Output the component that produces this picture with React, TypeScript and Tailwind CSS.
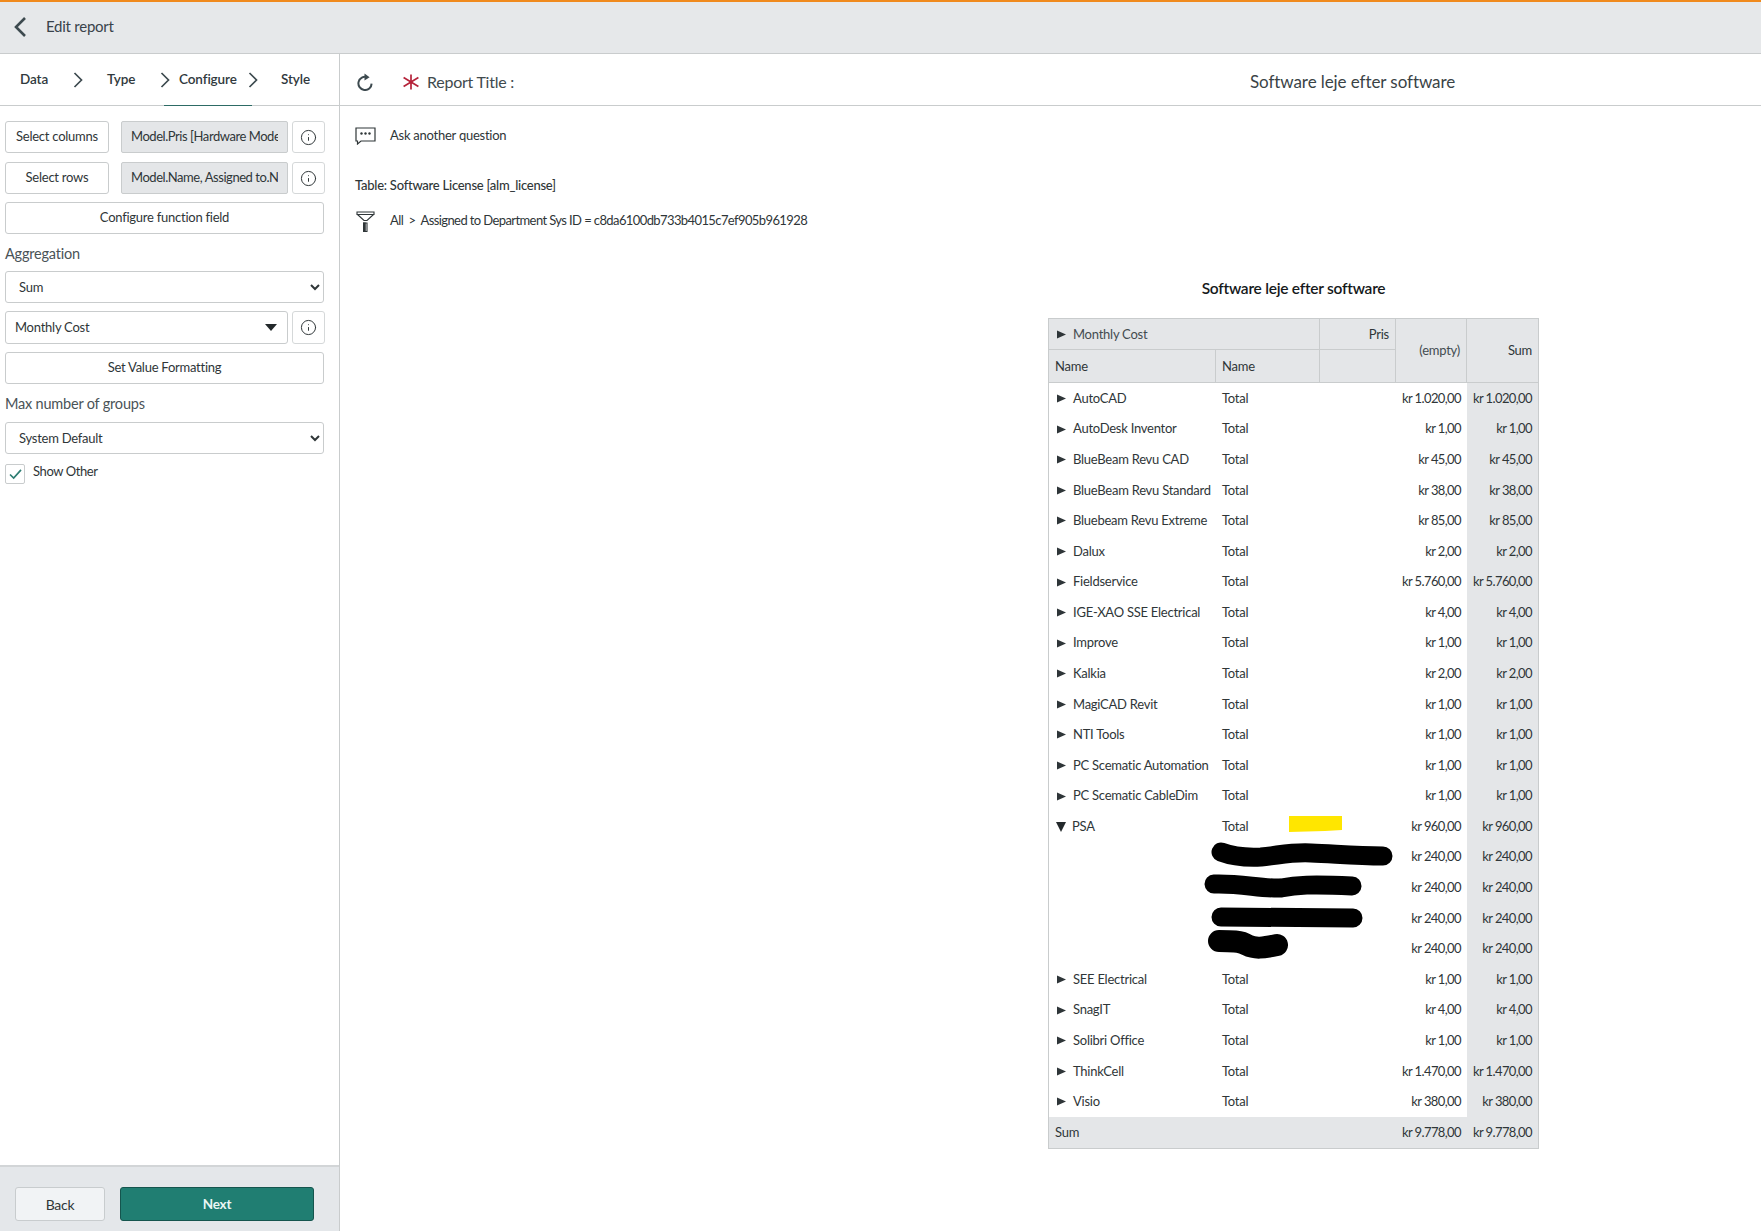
import { Info } from "lucide-react";

interface ReportRow {
  name: string;
  value: string;
  open?: boolean;
}

const rows: ReportRow[] = [
  { name: "AutoCAD", value: "kr 1.020,00" },
  { name: "AutoDesk Inventor", value: "kr 1,00" },
  { name: "BlueBeam Revu CAD", value: "kr 45,00" },
  { name: "BlueBeam Revu Standard", value: "kr 38,00" },
  { name: "Bluebeam Revu Extreme", value: "kr 85,00" },
  { name: "Dalux", value: "kr 2,00" },
  { name: "Fieldservice", value: "kr 5.760,00" },
  { name: "IGE-XAO SSE Electrical", value: "kr 4,00" },
  { name: "Improve", value: "kr 1,00" },
  { name: "Kalkia", value: "kr 2,00" },
  { name: "MagiCAD Revit", value: "kr 1,00" },
  { name: "NTI Tools", value: "kr 1,00" },
  { name: "PC Scematic Automation", value: "kr 1,00" },
  { name: "PC Scematic CableDim", value: "kr 1,00" },
  { name: "PSA", value: "kr 960,00", open: true },
];

const tailRows: ReportRow[] = [
  { name: "SEE Electrical", value: "kr 1,00" },
  { name: "SnagIT", value: "kr 4,00" },
  { name: "Solibri Office", value: "kr 1,00" },
  { name: "ThinkCell", value: "kr 1.470,00" },
  { name: "Visio", value: "kr 380,00" },
];

function Chevron({ className }: { className: string }) {
  return (
    <svg viewBox="0 0 10 16" className={className} fill="none" stroke="#3d4a4f" strokeWidth="1.7">
      <path d="M1.5 1 L8.5 8 L1.5 15" />
    </svg>
  );
}

function RowTriangle() {
  return (
    <svg viewBox="0 0 9 9" className="w-[9px] h-[9px] ml-[8px] mr-[7px] shrink-0" fill="#2e3538">
      <path d="M0 0.5 L9 4.5 L0 8.5 Z" />
    </svg>
  );
}

function BodyRow({ row }: { row: ReportRow }) {
  return (
    <div className="grid grid-cols-[167px_104px_76px_71px_71px] h-[30.58px] items-center">
      <div className="flex items-center whitespace-nowrap">
        {row.open ? (
          <svg viewBox="0 0 10 10" className="w-[10px] h-[10px] ml-[7px] mr-[6px] shrink-0" fill="#23292b">
            <path d="M0 0 L10 0 L5 10 Z" />
          </svg>
        ) : (
          <RowTriangle />
        )}
        {row.name}
      </div>
      <div className="pl-[6px]">Total</div>
      <div />
      <div className="pr-[6px] text-right whitespace-nowrap tracking-[-0.6px]">{row.value}</div>
      <div className="pr-[6px] whitespace-nowrap tracking-[-0.6px] bg-[#e4e6e8] h-full flex items-center justify-end">
        {row.value}
      </div>
    </div>
  );
}

function SubRow() {
  return (
    <div className="grid grid-cols-[167px_104px_76px_71px_71px] h-[30.58px] items-center">
      <div />
      <div />
      <div />
      <div className="pr-[6px] text-right whitespace-nowrap tracking-[-0.6px]">kr 240,00</div>
      <div className="pr-[6px] whitespace-nowrap tracking-[-0.6px] bg-[#e4e6e8] h-full flex items-center justify-end">
        kr 240,00
      </div>
    </div>
  );
}

function ReportTable() {
  return (
    <div className="relative w-[491px] border border-[#c9cccd] text-[#2f3638]">
      <div className="grid grid-cols-[167px_104px_76px_71px_71px] grid-rows-[31px_32px] bg-[#e4e6e8] border-b border-[#c9cccd]">
        <div className="col-span-2 flex items-center border-r border-b border-[#c9cccd] text-[#434c50]">
          <RowTriangle />
          Monthly Cost
        </div>
        <div className="flex items-center justify-end pr-[6px] border-r border-b border-[#c9cccd]">Pris</div>
        <div className="row-span-2 flex items-center justify-end pr-[6px] border-r border-[#c9cccd] text-[#434c50]">
          (empty)
        </div>
        <div className="row-span-2 flex items-center justify-end pr-[6px]">Sum</div>
        <div className="flex items-center pl-[6px] border-r border-[#c9cccd]">Name</div>
        <div className="flex items-center pl-[6px] border-r border-[#c9cccd]">Name</div>
        <div className="border-r border-[#c9cccd]" />
      </div>
      {rows.map((r) => (
        <BodyRow key={r.name} row={r} />
      ))}
      <SubRow />
      <SubRow />
      <SubRow />
      <SubRow />
      {tailRows.map((r) => (
        <BodyRow key={r.name} row={r} />
      ))}
      <div className="grid grid-cols-[271px_76px_71px_71px] h-[31px] items-center bg-[#e4e6e8]">
        <div className="pl-[6px]">Sum</div>
        <div />
        <div className="pr-[6px] text-right whitespace-nowrap tracking-[-0.6px]">kr 9.778,00</div>
        <div className="pr-[6px] text-right whitespace-nowrap tracking-[-0.6px]">kr 9.778,00</div>
      </div>
      {/* redactions painted over the PSA rows */}
      <svg viewBox="0 0 200 150" className="absolute left-[152px] top-[490px] w-[200px] h-[150px]" fill="none" stroke="#000" strokeLinecap="round">
        <path d="M20 43 C28 46 40 49 60 48 C80 46 90 43 110 44 C135 45 155 47 182 47" strokeWidth="19" />
        <path d="M13 75 C40 74 60 80 80 79 C95 76 110 75 151 77" strokeWidth="19" />
        <path d="M20 108 L152 109" strokeWidth="19" />
        <path d="M18 132 C30 132 40 132 46 136 C54 140 62 139 76 136" strokeWidth="22" />
        <path d="M88 7 L141 7 L141 21 L124 22 L88 23 Z" fill="#ffe600" stroke="none" />
      </svg>
    </div>
  );
}

export default function App() {
  const field = "border border-[#c9cccd] rounded-[3px] bg-white";
  const readField = "w-[167px] mr-[4px] px-[9px] tracking-[-0.45px] bg-[#e4e6e8] border border-[#c9cccd] rounded-[2px] outline-none";
  const infoBtn = "w-[33px] border border-[#d5d8d9] rounded-[3px] flex items-center justify-center";

  return (
    <div
      className="w-[1761px] h-[1231px] overflow-hidden flex flex-col bg-white text-[#2f3638] text-[13px] tracking-[-0.25px]"
      style={{ fontFamily: "Lato, 'Noto Sans', sans-serif" }}
    >
      {/* Top bar */}
      <div className="h-[54px] shrink-0 bg-[#e6e8ea] border-t-2 border-t-[#f08a1d] border-b border-b-[#c9cccd] flex items-center">
        <svg viewBox="0 0 14 22" className="w-[14px] h-[22px] ml-[13px] mb-[2px]" fill="none" stroke="#3d4a4f" strokeWidth="2.6">
          <path d="M12 2 L3 11 L12 20" />
        </svg>
        <span className="ml-[19px] mb-[2px] text-[15px] text-[#39434a]">Edit report</span>
      </div>

      <div className="flex flex-1 min-h-0">
        {/* Left panel */}
        <aside className="w-[340px] shrink-0 border-r border-[#c9cccd] flex flex-col">
          <div className="h-[52px] shrink-0 border-b border-[#c9cccd] flex items-center font-semibold text-[13.5px] tracking-[-0.1px] text-[#30393d] relative">
            <span className="ml-[20px] w-[27px]">Data</span>
            <Chevron className="w-[10px] h-[16px] ml-[26px]" />
            <span className="ml-[24px] w-[29px]">Type</span>
            <Chevron className="w-[10px] h-[16px] ml-[24px]" />
            <span className="ml-[9px] w-[59px] whitespace-nowrap">Configure</span>
            <Chevron className="w-[10px] h-[16px] ml-[10px]" />
            <span className="ml-[23px]">Style</span>
            <div className="absolute left-[164px] bottom-[-1px] w-[88px] h-px bg-[#2d6b65]" />
          </div>

          <div className="flex-1 px-[5px] pt-[15px] flex flex-col">
            <div className="flex h-[32px]">
              <button className={`${field} w-[104px] mr-[12px]`}>Select columns</button>
              <input readOnly value="Model.Pris [Hardware Model]" className={readField} />
              <div className={infoBtn}>
                <Info size={17} strokeWidth={1.4} />
              </div>
            </div>
            <div className="flex h-[32px] mt-[9px]">
              <button className={`${field} w-[104px] mr-[12px]`}>Select rows</button>
              <input readOnly value="Model.Name, Assigned to.Name" className={readField} />
              <div className={infoBtn}>
                <Info size={17} strokeWidth={1.4} />
              </div>
            </div>
            <button className={`${field} w-[319px] h-[32px] mt-[8px]`}>Configure function field</button>

            <div className="mt-[6px] h-[28px] flex items-center text-[14.5px] tracking-[-0.2px] text-[#4a5357]">Aggregation</div>
            <select className={`${field} w-[319px] h-[32px] mt-[3px] px-[9px] outline-none`} defaultValue="Sum">
              <option>Sum</option>
            </select>
            <div className="flex h-[33px] mt-[8px]">
              <div className={`${field} w-[283px] mr-[4px] pl-[9px] pr-[10px] flex items-center justify-between`}>
                <span>Monthly Cost</span>
                <svg viewBox="0 0 12 7" className="w-[12px] h-[7px]" fill="#23292b">
                  <path d="M0 0 L12 0 L6 7 Z" />
                </svg>
              </div>
              <div className={infoBtn}>
                <Info size={17} strokeWidth={1.4} />
              </div>
            </div>
            <button className={`${field} w-[319px] h-[32px] mt-[8px]`}>Set Value Formatting</button>

            <div className="mt-[6px] h-[28px] flex items-center text-[14.5px] tracking-[-0.2px] text-[#4a5357]">Max number of groups</div>
            <select className={`${field} w-[319px] h-[32px] mt-[4px] px-[9px] outline-none`} defaultValue="System Default">
              <option>System Default</option>
            </select>
            <div className="flex items-center mt-[8px]">
              <div className="w-[20px] h-[20px] border border-[#c9cccd] rounded-[2px] flex items-center justify-center">
                <svg viewBox="0 0 14 12" className="w-[13px] h-[11px] mt-[2px]" fill="none" stroke="#2d7d72" strokeWidth="1.8">
                  <path d="M1 6 L5 10 L13 1" />
                </svg>
              </div>
              <span className="ml-[8px] mb-[4px] tracking-[-0.4px]">Show Other</span>
            </div>
          </div>

          <div className="h-[66px] shrink-0 bg-[#e4e7ea] border-t-2 border-[#d2d5d7] flex items-start pt-[20px] pl-[15px]">
            <button className="w-[90px] h-[34px] bg-[#f1f3f5] border border-[#c8ccce] rounded-[3px] text-[14px]">Back</button>
            <button className="w-[194px] h-[34px] ml-[15px] bg-[#207e72] border border-[#15554e] rounded-[3px] text-[13.5px] font-bold text-[#eaf6f4]">
              Next
            </button>
          </div>
        </aside>

        {/* Report preview */}
        <main className="flex-1 min-w-0 flex flex-col">
          <div className="h-[52px] shrink-0 border-b border-[#c9cccd] flex items-center pt-[4px]">
            <svg viewBox="0 0 16 18" className="w-[16px] h-[18px] ml-[17px]" fill="none" stroke="#3d4a4f" strokeWidth="2">
              <path d="M10.2 4.2 A6.6 6.6 0 1 0 14.6 10.6" />
              <path d="M7.5 0.5 L12.6 4.2 L7.5 7.6 Z" fill="#3d4a4f" stroke="none" />
            </svg>
            <svg viewBox="0 0 16 16" className="w-[16px] h-[16px] ml-[30px]" fill="none" stroke="#b5233a" strokeWidth="1.7">
              <path d="M8 0.5 V15.5 M0.6 3.6 L15.4 12.4 M0.6 12.4 L15.4 3.6" />
            </svg>
            <span className="ml-[8px] text-[16px] text-[#414a4e] whitespace-nowrap">Report Title :</span>
            <span className="ml-[736px] text-[17px] tracking-[-0.08px] text-[#3a4346] whitespace-nowrap">Software leje efter software</span>
          </div>

          <div className="pl-[15px] pt-[19px]">
            <div className="flex items-center h-[22px]">
              <svg viewBox="0 0 21 18" className="w-[21px] h-[18px]" fill="none" stroke="#2f3638" strokeWidth="1.2">
                <path d="M1 1 H20 V14 H6 L2.5 17 V14 H1 Z" />
                <circle cx="6.5" cy="6.5" r="1.2" fill="#2f3638" stroke="none" />
                <circle cx="10.5" cy="6.5" r="1.2" fill="#2f3638" stroke="none" />
                <circle cx="14.5" cy="6.5" r="1.2" fill="#2f3638" stroke="none" />
              </svg>
              <span className="ml-[14px]">Ask another question</span>
            </div>
            <div className="mt-[28px] font-medium h-[22px] flex items-center">Table: Software License [alm_license]</div>
            <div className="mt-[13px] flex items-center h-[22px]">
              <svg viewBox="0 0 19 21" className="w-[19px] h-[21px] ml-[1px]" fill="none" stroke="#2f3638" strokeWidth="1.1">
                <path d="M1 1 H18 V3.5 H1 Z M1.5 3.5 L8 9.5 H11 L17.5 3.5" />
                <path d="M7.6 12 H11 V20.5 H7.6 Z" />
                <path d="M7.6 12 H9.2 V20.5 H7.6 Z" fill="#2f3638" />
              </svg>
              <span className="ml-[15px] tracking-[-0.6px]">All&nbsp; &gt;&nbsp; Assigned to Department Sys ID = c8da6100db733b4015c7ef905b961928</span>
            </div>
          </div>

          <div className="pl-[708px] flex flex-col items-start">
            <div className="w-[491px] mt-[45px] mb-[18px] text-center text-[15.5px] font-semibold text-[#15191b]">
              Software leje efter software
            </div>
            <ReportTable />
          </div>
        </main>
      </div>
    </div>
  );
}
